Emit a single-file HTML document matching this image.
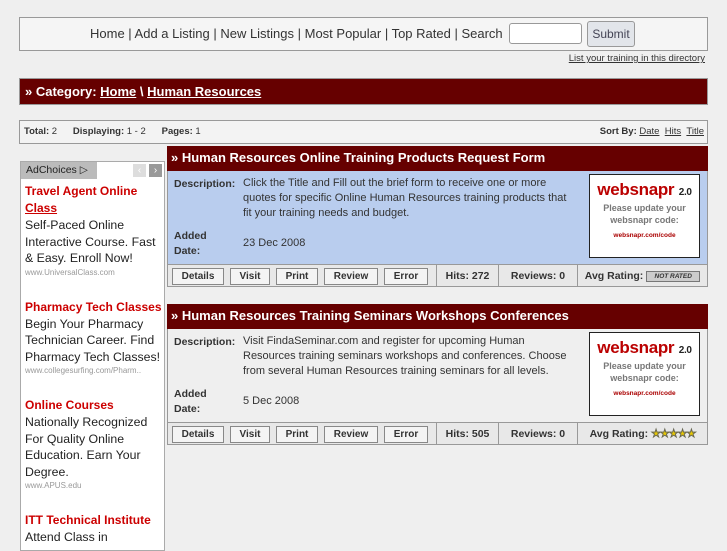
<!DOCTYPE html>
<html><head><meta charset="utf-8"><style>
*{margin:0;padding:0;box-sizing:border-box}
body{width:727px;height:545px;background:#efefef;font-family:"Liberation Sans",sans-serif;position:relative;overflow:hidden;color:#333}
.a{position:absolute}
.nav{left:19px;top:17px;width:689px;height:34px;border:1px solid #999;background:#f5f5f5;font-size:13px;color:#333}
.bar{background:#660000;color:#fff;font-weight:bold;font-size:13px;border:1px solid #999}
.bar a{color:#fff;text-decoration:underline}
.btn{position:absolute;top:3px;height:17px;border:1px solid #888;background:#f4f4f4;font-size:10px;font-weight:bold;text-align:center;line-height:15px;color:#333}
.cell{position:absolute;top:0;height:22px;border-left:1px solid #999;font-size:10.5px;font-weight:bold;line-height:22px;text-align:center;color:#333}
.lab{font-size:10.5px;font-weight:bold;color:#333}
.txt{font-size:11px;color:#333;line-height:15px;white-space:nowrap}
.ws{width:111px;height:84px;background:#fff;border:1px solid #222;text-align:center}
.ad h{display:block;color:#c00;font-weight:bold;font-size:12px;line-height:17px}
.ad p{font-size:12.3px;line-height:16.5px;color:#222}
.ad s{display:block;text-decoration:none;font-size:8px;color:#999;line-height:12px;margin-bottom:20px}
</style></head><body>
<div class="a nav"><div class="a" style="left:70px;top:8px;white-space:nowrap">Home | Add a Listing | New Listings | Most Popular | Top Rated | Search</div>
<div class="a" style="left:489px;top:5px;width:73px;height:21px;background:#fff;border:1px solid #999;border-radius:3px"></div>
<div class="a" style="left:567px;top:3px;width:48px;height:26px;background:#e2e5ea;border:1px solid #999;border-radius:3px;font-size:12px;line-height:24px;text-align:center;color:#445">Submit</div></div>
<div class="a" style="right:22px;top:53px;font-size:9.5px;text-decoration:underline;color:#333">List your training in this directory</div>
<div class="a bar" style="left:19px;top:78px;width:689px;height:27px;line-height:25px;padding-left:5px">» Category: <a>Home</a> \ <a>Human Resources</a></div>
<div class="a" style="left:19px;top:120px;width:689px;height:24px;border:1px solid #999;background:#f3f3f3;font-size:9.5px;line-height:22px;padding-left:4px"><b>Total:</b> 2 &nbsp; &nbsp; &nbsp;<b>Displaying:</b> 1 - 2 &nbsp; &nbsp; &nbsp;<b>Pages:</b> 1<span style="position:absolute;right:3px"><b>Sort By:</b> <u>Date</u> &nbsp;<u>Hits</u> &nbsp;<u>Title</u></span></div>

<div class="a ad" style="left:20px;top:161px;width:145px;height:390px;background:#fff;border:1px solid #aaa">
<div class="a" style="left:0;top:0;width:76px;height:17px;background:#bbb;font-size:10.5px;line-height:17px;padding-left:5px;color:#222">AdChoices ▷</div>
<div class="a" style="left:112px;top:2px;width:13px;height:13px;background:#ddd;color:#fff;font-size:10px;line-height:13px;text-align:center">‹</div>
<div class="a" style="left:128px;top:2px;width:13px;height:13px;background:#999;color:#fff;font-size:10px;line-height:13px;text-align:center">›</div>
<div class="a" style="left:4px;top:21px;width:138px">
<h>Travel Agent Online <u>Class</u></h><p>Self-Paced Online Interactive Course. Fast &amp; Easy. Enroll Now!</p><s>www.UniversalClass.com</s>
<h>Pharmacy Tech Classes</h><p>Begin Your Pharmacy Technician Career. Find Pharmacy Tech Classes!</p><s>www.collegesurfing.com/Pharm..</s>
<h>Online Courses</h><p>Nationally Recognized For Quality Online Education. Earn Your Degree.</p><s>www.APUS.edu</s>
<h>ITT Technical Institute</h><p>Attend Class in</p></div></div>

<!-- listing 1 -->
<div class="a" style="left:167px;top:146px;width:541px;height:141px;border:1px solid #999;background:#b9cdee">
<div class="a bar" style="left:-1px;top:-1px;width:541px;height:25px;line-height:23px;padding-left:4px;border:none">» Human Resources Online Training Products Request Form</div>
<div class="a lab" style="left:6px;top:31px">Description:</div>
<div class="a txt" style="left:75px;top:29px">Click the Title and Fill out the brief form to receive one or more<br>quotes for specific Online Human Resources training products that<br>fit your training needs and budget.</div>
<div class="a lab" style="left:6px;top:82px;line-height:15px">Added<br>Date:</div>
<div class="a txt" style="left:75px;top:89px">23 Dec 2008</div>
<div class="a ws" style="left:421px;top:27px"><div style="color:#b00;font-weight:900;font-size:17px;margin-top:5px;letter-spacing:-0.3px">websnapr <span style="font-size:10px;color:#222">2.0</span></div><div style="font-size:9px;color:#777;font-weight:bold;line-height:12px;margin-top:2px">Please update your<br>websnapr code:</div><div style="font-size:6.5px;color:#a00;font-weight:bold;margin-top:6px">websnapr.com/code</div></div>
<div class="a" style="left:0;top:117px;width:539px;height:22px;background:#e8e8e8;border-top:1px solid #999">
<div class="btn" style="left:4px;width:52px">Details</div><div class="btn" style="left:62px;width:40px">Visit</div><div class="btn" style="left:108px;width:42px">Print</div><div class="btn" style="left:156px;width:54px">Review</div><div class="btn" style="left:216px;width:44px">Error</div>
<div class="cell" style="left:268px;width:62px">Hits: 272</div><div class="cell" style="left:330px;width:79px">Reviews: 0</div><div class="cell" style="left:409px;width:130px">Avg Rating: <span style="display:inline-block;width:54px;height:11px;border:1px solid #777;background:#ccc;font-size:6.5px;font-style:italic;line-height:9px;vertical-align:middle">NOT RATED</span></div></div></div>

<!-- listing 2 -->
<div class="a" style="left:167px;top:304px;width:541px;height:141px;border:1px solid #999;background:#efefef">
<div class="a bar" style="left:-1px;top:-1px;width:541px;height:25px;line-height:23px;padding-left:4px;border:none">» Human Resources Training Seminars Workshops Conferences</div>
<div class="a lab" style="left:6px;top:31px">Description:</div>
<div class="a txt" style="left:75px;top:29px">Visit FindaSeminar.com and register for upcoming Human<br>Resources training seminars workshops and conferences. Choose<br>from several Human Resources training seminars for all levels.</div>
<div class="a lab" style="left:6px;top:82px;line-height:15px">Added<br>Date:</div>
<div class="a txt" style="left:75px;top:89px">5 Dec 2008</div>
<div class="a ws" style="left:421px;top:27px"><div style="color:#b00;font-weight:900;font-size:17px;margin-top:5px;letter-spacing:-0.3px">websnapr <span style="font-size:10px;color:#222">2.0</span></div><div style="font-size:9px;color:#777;font-weight:bold;line-height:12px;margin-top:2px">Please update your<br>websnapr code:</div><div style="font-size:6.5px;color:#a00;font-weight:bold;margin-top:6px">websnapr.com/code</div></div>
<div class="a" style="left:0;top:117px;width:539px;height:22px;background:#e8e8e8;border-top:1px solid #999">
<div class="btn" style="left:4px;width:52px">Details</div><div class="btn" style="left:62px;width:40px">Visit</div><div class="btn" style="left:108px;width:42px">Print</div><div class="btn" style="left:156px;width:54px">Review</div><div class="btn" style="left:216px;width:44px">Error</div>
<div class="cell" style="left:268px;width:62px">Hits: 505</div><div class="cell" style="left:330px;width:79px">Reviews: 0</div><div class="cell" style="left:409px;width:130px">Avg Rating: <span style="color:#e8c800;font-size:11px;letter-spacing:-1px;-webkit-text-stroke:0.5px #665">★★★★★</span></div></div></div>
</body></html>
